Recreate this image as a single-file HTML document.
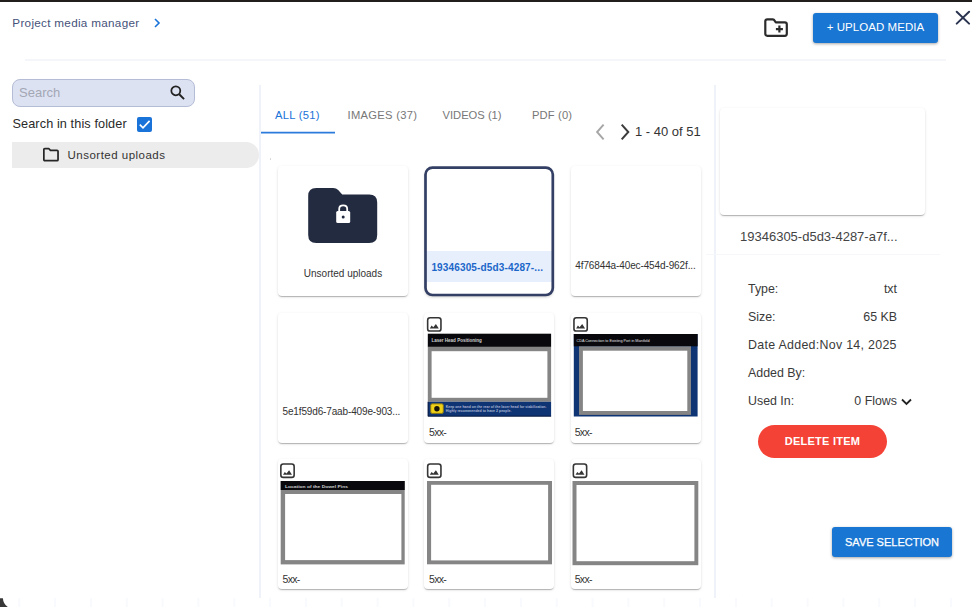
<!DOCTYPE html>
<html>
<head>
<meta charset="utf-8">
<title>Project media manager</title>
<style>
*{box-sizing:border-box;margin:0;padding:0}
html,body{width:972px;height:607px;overflow:hidden;background:#fff;font-family:"Liberation Sans",sans-serif;color:#222}
.abs{position:absolute}
#topbar{left:0;top:0;width:972px;height:2px;background:#221e1c}
#title{left:12.300px;top:16.400px;font-size:11.7px;letter-spacing:.3px;color:#46527a;line-height:14px;white-space:nowrap}
#hr{left:25px;top:59px;width:921px;height:2px;background:#f5f6fa}
#search{left:12px;top:79px;width:183px;height:28px;background:#dde2f2;border:1px solid #b5bcd6;border-radius:8px}
#search span{position:absolute;left:6px;top:5px;font-size:13px;color:#a3a7b5;line-height:16px}
#sif{left:12.500px;top:116px;font-size:12.7px;letter-spacing:.1px;color:#2a2a2a;line-height:16px;white-space:nowrap}
#cb{left:137px;top:117px;width:15px;height:15px;background:#1a73d8;border-radius:2px}
#frow{left:12px;top:142px;width:247px;height:26px;background:#ececec;border-radius:0 13px 13px 0}
#frow span{position:absolute;left:55.500px;top:6px;font-size:11.5px;letter-spacing:.49px;color:#333;line-height:14px;white-space:nowrap}
#v1{left:259.200px;top:85px;width:1.800px;height:512.500px;background:#f0f2f9}
#v2{left:713.600px;top:85px;width:2.100px;height:512.500px;background:#f0f2f9}
.tab{top:107.500px;font-size:11.2px;letter-spacing:.3px;line-height:14px;color:#777;white-space:nowrap}
#pag{left:635px;top:124px;font-size:13px;line-height:16px;color:#333;white-space:nowrap}
.card{width:130px;height:130px;background:#fff;border-radius:4px;box-shadow:0 2px 1px -1px rgba(0,0,0,.15),0 1px 1px 0 rgba(0,0,0,.1),0 1px 3px 0 rgba(0,0,0,.12)}
.cap{position:absolute;font-size:9.5px;line-height:12px;color:#333;white-space:nowrap}
.btn{color:#fff;font-size:11.5px;text-align:center;white-space:nowrap;border-radius:3px;background:#1976d2;box-shadow:0 1px 3px rgba(0,0,0,.35)}
.meta{font-size:12.4px;line-height:16px;color:#3a3a3a;white-space:nowrap}
.tick{top:598px;width:1px;height:9px;background:#f0f2f9}
</style>
</head>
<body>
<div class="abs" id="topbar"></div>
<div class="abs" id="title">Project media manager</div>
<svg class="abs" style="left:152.500px;top:16.500px" width="8" height="12" viewBox="0 0 8 12"><path d="M2 2 L6 6 L2 10" fill="none" stroke="#1a73d8" stroke-width="1.6"/></svg>
<div class="abs" id="hr"></div>

<!-- header right -->
<svg class="abs" style="left:763px;top:17px" width="26" height="22" viewBox="0 0 26 22"><path d="M2.300 4.300 Q2.300 2.300 4.300 2.300 H9.600 Q10.400 2.300 11 2.900 L12.800 5.300 H21.800 Q23.800 5.300 23.800 7.300 V16.800 Q23.800 18.800 21.800 18.800 H4.300 Q2.300 18.800 2.300 16.800 Z" fill="none" stroke="#2b2b2b" stroke-width="2.200" stroke-linejoin="round"/><path d="M16.400 8.600 V15.600 M12.900 12.100 H19.900" stroke="#2b2b2b" stroke-width="2.200"/></svg>
<div class="abs btn" style="left:813px;top:13px;width:125px;height:30px;line-height:29.200px;letter-spacing:.05px">+ UPLOAD MEDIA</div>
<svg class="abs" style="left:955px;top:10px" width="16" height="16" viewBox="0 0 16 16"><path d="M1.700 1.700 L14.100 13.600 M14.100 1.700 L1.700 13.600" stroke="#2a3450" stroke-width="2" stroke-linecap="round"/></svg>

<!-- left -->
<div class="abs" id="search"><span>Search</span>
<svg style="position:absolute;left:155.800px;top:4px" width="17.500" height="17.500" viewBox="0 0 18 18"><circle cx="7" cy="7" r="4.6" fill="none" stroke="#222" stroke-width="1.8"/><path d="M10.5 10.5 L15.5 15.5" stroke="#222" stroke-width="2"/></svg>
</div>
<div class="abs" id="sif">Search in this folder</div>
<div class="abs" id="cb"><svg width="15" height="15" viewBox="0 0 15 15"><path d="M2.800 7.600 L6 10.800 L12.600 3.900" fill="none" stroke="#fff" stroke-width="1.700"/></svg></div>
<div class="abs" id="frow">
<svg style="position:absolute;left:30px;top:5.400px" width="17.900" height="15.200" viewBox="0 0 17 15"><path d="M1.5 2.5 Q1.5 1.5 2.5 1.5 H6.3 L8 3.3 H14.5 Q15.5 3.3 15.5 4.3 V12.5 Q15.5 13.5 14.5 13.5 H2.5 Q1.5 13.5 1.5 12.5 Z" fill="none" stroke="#262626" stroke-width="1.700" stroke-linejoin="round"/></svg>
<span>Unsorted uploads</span></div>
<div class="abs" id="v1"></div>
<div class="abs" id="v2"></div>
<div class="abs" style="left:269.700px;top:158.300px;width:1.500px;height:1.500px;border-radius:1px;background:#d2d2d2"></div>

<!-- tabs -->
<div class="abs tab" style="left:275px;color:#1a73d8">ALL (51)</div>
<div class="abs tab" style="left:347.500px">IMAGES (37)</div>
<div class="abs tab" style="left:442.500px;letter-spacing:0">VIDEOS (1)</div>
<div class="abs tab" style="left:532px;letter-spacing:.15px">PDF (0)</div>
<svg class="abs" style="left:260px;top:130px" width="80" height="6" viewBox="0 0 80 6"><rect x="1" y="1.750" width="74" height="1.750" fill="#2a7bdc"/></svg>
<svg class="abs" style="left:594px;top:123px" width="14" height="18" viewBox="0 0 14 18"><path d="M9.600 1.600 L3.100 9 L9.600 16.400" fill="none" stroke="#a6a6a6" stroke-width="1.900"/></svg>
<svg class="abs" style="left:618px;top:123px" width="14" height="18" viewBox="0 0 14 18"><path d="M3.700 1.600 L10.300 9 L3.700 16.400" fill="none" stroke="#3c3c3c" stroke-width="2"/></svg>
<div class="abs" id="pag">1 - 40 of 51</div>

<!-- row 1 -->
<div class="abs card" style="left:278px;top:166px">
<div class="cap" style="left:0;width:130px;text-align:center;top:101.500px;font-size:10px">Unsorted uploads</div>
</div>
<div class="abs" style="left:425px;top:167px;width:128px;height:128px;border-radius:7px;background:#fff;box-shadow:0 2px 3px rgba(0,0,0,.22)">
<div style="position:absolute;left:1px;top:84px;width:126px;height:31px;background:#e7effc"></div>
<div class="cap" style="left:6.400px;top:95px;color:#1b66c9;font-weight:bold;font-size:10px;letter-spacing:.15px">19346305-d5d3-4287-...</div>
</div>
<div class="abs card" style="left:571px;top:166px">
<div class="cap" style="left:4.300px;top:93.500px;font-size:10px;letter-spacing:-.12px">4f76844a-40ec-454d-962f...</div>
</div>
<!-- row 2 -->
<div class="abs card" style="left:278px;top:313px">
<div class="cap" style="left:4.500px;top:92.700px;font-size:10px;letter-spacing:-.14px">5e1f59d6-7aab-409e-903...</div>
</div>
<div class="abs card" style="left:424px;top:313px"><div class="cap" style="left:5px;top:113px;font-size:10.500px;letter-spacing:-.7px">5xx-</div></div>
<div class="abs card" style="left:571px;top:313px"><div class="cap" style="left:3.7px;top:113px;font-size:10.500px;letter-spacing:-.7px">5xx-</div></div>
<div class="abs card" style="left:278px;top:459px"><div class="cap" style="left:4.5px;top:114px;font-size:10.500px;letter-spacing:-.7px">5xx-</div></div>
<div class="abs card" style="left:424px;top:459px"><div class="cap" style="left:5px;top:114px;font-size:10.500px;letter-spacing:-.7px">5xx-</div></div>
<div class="abs card" style="left:571px;top:459px"><div class="cap" style="left:3.7px;top:114px;font-size:10.500px;letter-spacing:-.7px">5xx-</div></div>
<svg class="abs" style="left:0;top:0" width="972" height="607" viewBox="0 0 972 607" font-family="Liberation Sans, sans-serif" font-weight="bold">
<g transform="translate(308.200 187.900)"><path d="M0 8 Q0 0 8 0 H25 Q28 0 30 2 L34 6.500 H61 Q69 6.500 69 14.500 V47 Q69 55 61 55 H8 Q0 55 0 47 Z" fill="#222b3f"/><rect x="28" y="23" width="14" height="12" rx="1.500" fill="#fff"/><path d="M31 23 V21 Q31 17.500 35 17.500 Q39 17.500 39 21 V23" fill="none" stroke="#fff" stroke-width="1.800"/><circle cx="35" cy="29" r="1.500" fill="#222b3f"/></g>
<rect x="425.500" y="167.600" width="127.300" height="127.400" rx="7" fill="none" stroke="#333f64" stroke-width="2.700"/>
<g transform="translate(426.9 317)"><rect x="0.750" y="0.750" width="13.300" height="13.300" rx="2.400" fill="#fff" stroke="#353535" stroke-width="1.600"/><path d="M2.900 11.400 L4.700 8.600 L6.400 10.300 L9 7 L11.900 11.400 Z" fill="#353535"/></g>
<rect x="427.8" y="333.7" width="123.3" height="13.2" fill="#09090d"/>
<rect x="427.8" y="346.9" width="123.3" height="54.9" fill="#858585"/>
<rect x="431.6" y="351.2" width="115.8" height="46.6" fill="#fff"/>
<rect x="427.8" y="401.8" width="123.3" height="14.7" fill="#0e3474"/>
<path d="M428.100 401.800 V416.200 H551.100" fill="none" stroke="#070d26" stroke-width="0.700"/>
<rect x="430.7" y="403.8" width="12.6" height="9.6" fill="#f0d116" stroke="#85761a" stroke-width="1" rx="1.500"/>
<circle cx="436.900" cy="408.700" r="2.700" fill="#15130a"/>
<text x="431.400" y="342" font-size="4.600" textLength="50.500" lengthAdjust="spacingAndGlyphs" fill="#cfcfcf">Laser Head Positioning</text>
<text x="445.700" y="408.400" font-size="3.600" textLength="100.800" lengthAdjust="spacingAndGlyphs" fill="#adb6d0">Keep one hand on the rear of the laser head for stabilization.</text>
<text x="445.700" y="412.100" font-size="3.600" textLength="65.700" lengthAdjust="spacingAndGlyphs" fill="#adb6d0">Highly recommended to have 2 people.</text>
<g transform="translate(573.2 317)"><rect x="0.750" y="0.750" width="13.300" height="13.300" rx="2.400" fill="#fff" stroke="#353535" stroke-width="1.600"/><path d="M2.900 11.400 L4.700 8.600 L6.400 10.300 L9 7 L11.900 11.400 Z" fill="#353535"/></g>
<rect x="573.8" y="334" width="123.8" height="82.5" fill="#0e3474"/>
<rect x="573.8" y="334" width="123.8" height="12.3" fill="#09090d"/>
<rect x="579" y="346.3" width="112" height="68.6" fill="#858585"/>
<rect x="582.9" y="350.7" width="104.4" height="60.3" fill="#fff"/>
<text x="576.600" y="341.700" font-size="3.800" font-weight="normal" textLength="72.900" lengthAdjust="spacingAndGlyphs" fill="#e4e4e4">CDA Connection to Existing Port in Manifold</text>
<g transform="translate(280.1 463.3)"><rect x="0.750" y="0.750" width="13.300" height="13.300" rx="2.400" fill="#fff" stroke="#353535" stroke-width="1.600"/><path d="M2.900 11.400 L4.700 8.600 L6.400 10.300 L9 7 L11.900 11.400 Z" fill="#353535"/></g>
<rect x="280.7" y="481" width="124" height="83.4" fill="#858585"/>
<rect x="280.7" y="481" width="124" height="9" fill="#09090d"/>
<rect x="285.1" y="494" width="116.3" height="66.1" fill="#fff"/>
<text x="285.100" y="487.700" font-size="4" textLength="62.800" lengthAdjust="spacingAndGlyphs" fill="#cfcfcf">Location of the Dowel Pins</text>
<g transform="translate(426.9 463.3)"><rect x="0.750" y="0.750" width="13.300" height="13.300" rx="2.400" fill="#fff" stroke="#353535" stroke-width="1.600"/><path d="M2.900 11.400 L4.700 8.600 L6.400 10.300 L9 7 L11.900 11.400 Z" fill="#353535"/></g>
<rect x="427" y="481" width="125" height="83.3" fill="#858585"/>
<rect x="431.1" y="484.8" width="117" height="75.6" fill="#fff"/>
<g transform="translate(572.6 463.3)"><rect x="0.750" y="0.750" width="13.300" height="13.300" rx="2.400" fill="#fff" stroke="#353535" stroke-width="1.600"/><path d="M2.900 11.400 L4.700 8.600 L6.400 10.300 L9 7 L11.900 11.400 Z" fill="#353535"/></g>
<rect x="572.5" y="481" width="125.8" height="84.2" fill="#858585"/>
<rect x="576.5" y="485" width="117.9" height="76.2" fill="#fff"/>
</svg>

<!-- right panel -->
<div class="abs" style="left:720px;top:108px;width:205px;height:107px;background:#fff;border-radius:4px;box-shadow:0 2px 1px -1px rgba(0,0,0,.15),0 1px 1px 0 rgba(0,0,0,.1),0 1px 3px 0 rgba(0,0,0,.12)"></div>
<div class="abs meta" style="left:740px;top:229px;font-size:13px;color:#444">19346305-d5d3-4287-a7f...</div>
<div class="abs" style="left:705.500px;top:254.300px;width:234.500px;height:1px;background:#f6f7fb"></div>
<div class="abs meta" style="left:748px;top:281px">Type:</div>
<div class="abs meta" style="left:748px;top:309px">Size:</div>
<div class="abs meta" id="dateadd" style="left:748px;top:337px;letter-spacing:.3px">Date Added:Nov 14, 2025</div>
<div class="abs meta" style="left:748px;top:365px">Added By:</div>
<div class="abs meta" style="left:748px;top:393px">Used In:</div>
<div class="abs meta" style="left:797px;width:100px;text-align:right;top:281px">txt</div>
<div class="abs meta" style="left:797px;width:100px;text-align:right;top:309px">65 KB</div>
<div class="abs meta" style="left:797px;width:100px;text-align:right;top:393px">0 Flows</div>
<svg class="abs" style="left:900px;top:396.800px" width="13" height="10" viewBox="0 0 13 10"><path d="M2 2.500 L6.500 7 L11 2.500" fill="none" stroke="#222" stroke-width="1.8"/></svg>
<div class="abs" style="left:758px;top:424.700px;width:129px;height:33.300px;border-radius:17px;background:#f44336;color:#fff;font-size:11px;font-weight:bold;text-align:center;line-height:33px;letter-spacing:.25px">DELETE ITEM</div>
<div class="abs btn" style="left:832px;top:527px;width:120px;height:30px;line-height:31.500px;font-size:11px;-webkit-text-stroke:.25px #fff">SAVE SELECTION</div>

<!-- bottom ticks + corner -->
<svg class="abs" style="left:0;top:596px" width="972" height="11" viewBox="0 596 972 11">
<path d="M19.3 598V607M55.1 598V607M91.0 598V607M126.8 598V607M162.6 598V607M198.4 598V607M234.3 598V607M270.1 598V607M305.9 598V607M341.8 598V607M377.6 598V607M413.4 598V607M449.3 598V607M485.1 598V607M520.9 598V607M556.7 598V607M592.6 598V607M628.4 598V607M664.2 598V607M700.1 598V607M735.9 598V607M771.7 598V607M807.6 598V607M843.4 598V607M879.2 598V607M915.0 598V607M950.9 598V607" stroke="#f9fafd" stroke-width="2" fill="none"/>
<path d="M0 598.200 H2.900 Q3.200 603.800 7.800 607 H0 Z" fill="#383838"/>
</svg>
</body>
</html>
